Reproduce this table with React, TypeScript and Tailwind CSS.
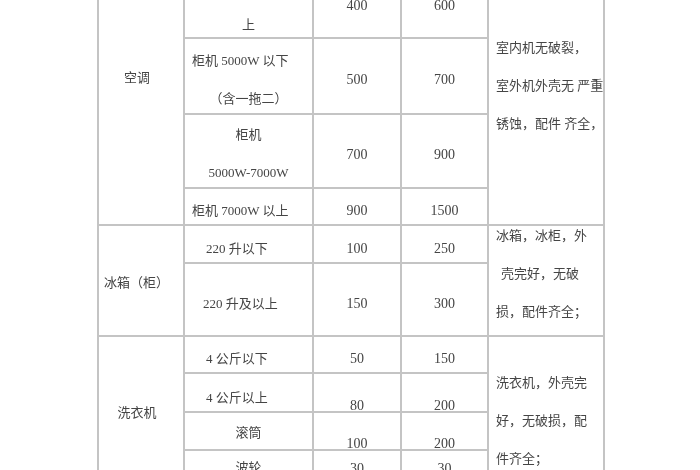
import clsx from "clsx";
import type { ReactNode } from "react";

const font = { fontFamily: '"Liberation Serif", "Noto Sans CJK SC", serif' };

function Cell({ children, className }: { children?: ReactNode; className?: string }) {
  return (
    <div className={clsx("flex border-b-2 border-r-2 border-[#c4c4c4] leading-[20px]", className)}>
      {children}
    </div>
  );
}

function Num({ v, className }: { v: string; className?: string }) {
  return <Cell className={clsx("items-center justify-center text-[14px]", className)}>{v}</Cell>;
}

function Lines({ items, className }: { items: ReactNode[]; className?: string }) {
  return (
    <Cell className={clsx("flex-col gap-[18px] whitespace-nowrap", className)}>
      {items.map((t, i) => (
        <div key={i}>{t}</div>
      ))}
    </Cell>
  );
}

export default function App() {
  return (
    <div className="h-[470px] w-[700px] overflow-hidden bg-white text-[#454545] text-[13px]" style={font}>
      <div className="ml-[97px] mt-[-69px] grid w-[508px] grid-cols-[86px_129px_88px_87px_116px] grid-rows-[42px_66px_76px_74px_37px_38px_73px_37px_39px_38px_40px] border-l-2 border-[#c4c4c4] blur-[0.3px]">
        {/* 空调 */}
        <Cell className="row-span-5 items-center justify-center pr-[8px]">空调</Cell>
        <Cell className="items-center justify-center">挂机 2500W 以下</Cell>
        <Num v="300" />
        <Num v="400" />
        <Lines
          className="row-span-5 pl-[7px] pt-[107px]"
          items={["室内机无破裂，", "室外机外壳无 严重", "锈蚀，配件 齐全，"]}
        />

        <Lines className="items-center justify-center pt-[2px]" items={["挂机 2500W 以", "上"]} />
        <Num v="400" className="pt-[2px]" />
        <Num v="600" className="pt-[2px]" />

        <Cell className="flex-col justify-center gap-[18px] whitespace-nowrap pt-[8px]">
          <div className="pl-[7px]">柜机 5000W 以下</div>
          <div className="text-center">（含一拖二）</div>
        </Cell>
        <Num v="500" className="pt-[8px]" />
        <Num v="700" className="pt-[8px]" />

        <Lines className="items-center justify-center pt-[5px]" items={["柜机", "5000W-7000W"]} />
        <Num v="700" className="pt-[8px]" />
        <Num v="900" className="pt-[8px]" />

        <Cell className="items-center whitespace-nowrap pl-[7px] pt-[9px]">柜机 7000W 以上</Cell>
        <Num v="900" className="pt-[9px]" />
        <Num v="1500" className="pt-[9px]" />

        {/* 冰箱 */}
        <Cell className="row-span-2 items-center pl-[5px] pt-[5px]">冰箱（柜）</Cell>
        <Cell className="items-center pl-[21px] pt-[10px]">220 升以下</Cell>
        <Num v="100" className="pt-[10px]" />
        <Num v="250" className="pt-[10px]" />
        <Cell className="row-span-2 flex-col gap-[18px] whitespace-nowrap pl-[7px]">
          <div>冰箱，冰柜，外</div>
          <div className="pl-[5px]">壳完好，无破</div>
          <div>损，配件齐全；</div>
        </Cell>

        <Cell className="items-center pl-[18px] pt-[9px]">220 升及以上</Cell>
        <Num v="150" className="pt-[9px]" />
        <Num v="300" className="pt-[9px]" />

        {/* 洗衣机 */}
        <Cell className="row-span-4 items-center justify-center pr-[8px]">洗衣机</Cell>
        <Cell className="items-center pl-[21px] pt-[9px]">4 公斤以下</Cell>
        <Num v="50" className="pt-[9px]" />
        <Num v="150" className="pt-[9px]" />
        <Lines
          className="row-span-4 pl-[7px] pt-[36px]"
          items={["洗衣机，外壳完", "好，无破损，配", "件齐全；"]}
        />

        <Cell className="items-center pl-[21px] pt-[11px]">4 公斤以上</Cell>
        <Num v="80" className="pt-[27px]" />
        <Num v="200" className="pt-[27px]" />

        <Cell className="items-center justify-center pt-[4px]">滚筒</Cell>
        <Num v="100" className="pt-[26px]" />
        <Num v="200" className="pt-[26px]" />

        <Cell className="items-center justify-center pb-[4px]">波轮</Cell>
        <Num v="30" className="pb-[2px]" />
        <Num v="30" className="pb-[2px]" />
      </div>
    </div>
  );
}
